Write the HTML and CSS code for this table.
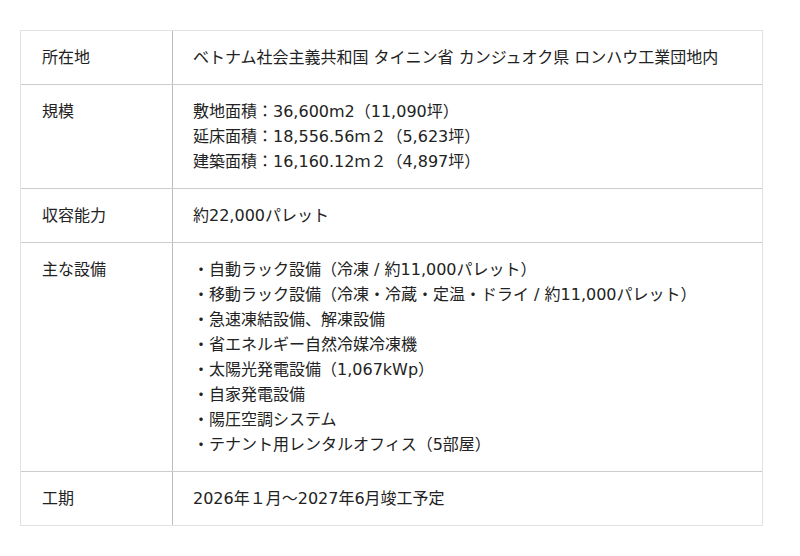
FILE: index.html
```html
<!DOCTYPE html>
<html lang="ja">
<head>
<meta charset="utf-8">
<link rel="stylesheet" href="styles.css">
</head>
<body>
<div class="spec">
  <div class="row">
    <div class="th">所在地</div>
    <div class="td">ベトナム社会主義共和国 タイニン省 カンジュオク県 ロンハウ工業団地内</div>
  </div>
  <div class="row">
    <div class="th">規模</div>
    <div class="td">敷地面積：36,600m2（11,090坪）<br>延床面積：18,556.56ｍ２（5,623坪）<br>建築面積：16,160.12ｍ２（4,897坪）</div>
  </div>
  <div class="row">
    <div class="th">収容能力</div>
    <div class="td">約22,000パレット</div>
  </div>
  <div class="row">
    <div class="th">主な設備</div>
    <div class="td">・自動ラック設備（冷凍 / 約11,000パレット）<br>・移動ラック設備（冷凍・冷蔵・定温・ドライ / 約11,000パレット）<br>・急速凍結設備、解凍設備<br>・省エネルギー自然冷媒冷凍機<br>・太陽光発電設備（1,067kWp）<br>・自家発電設備<br>・陽圧空調システム<br>・テナント用レンタルオフィス（5部屋）</div>
  </div>
  <div class="row">
    <div class="th">工期</div>
    <div class="td">2026年１月～2027年6月竣工予定</div>
  </div>
</div>
</body>
</html>
```

FILE: styles.css
```css
html, body {
  margin: 0;
  padding: 0;
  background: #ffffff;
}
body {
  font-family: "DejaVu Sans", "Noto Sans CJK JP", sans-serif;
  font-size: 16px;
  line-height: 25px;
  color: #222222;
}
.spec {
  margin: 30px 0 0 20px;
  width: 741px;
  border: 1px solid #e2e2e2;
}
.row {
  display: grid;
  grid-template-columns: 152px 1fr;
  border-top: 1px solid #cccccc;
}
.row:first-child {
  border-top: none;
}
.th {
  padding: 14px 20px 14px 21px;
  border-right: 1px solid #bdbdbd;
}
.td {
  padding: 14px 20px 14px 20px;
}
```
